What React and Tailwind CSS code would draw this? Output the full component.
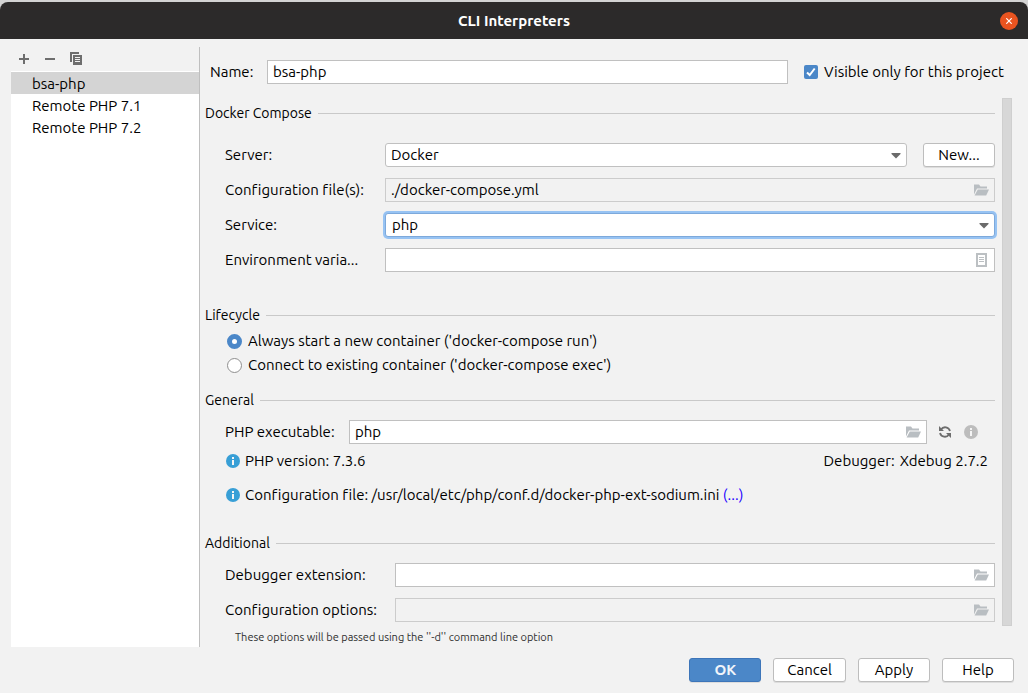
import React from "react";

function FolderIcon() {
  return (
    <svg width="16" height="12" viewBox="0 0 16 12" className="block" fill="#b9bec2" aria-hidden="true">
      <path d="M0 0.500h5l1.500 2H13v2H3L0 10.500z" />
      <path d="M3.800 5.500H15l-2.800 6H.6z" />
    </svg>
  );
}

function DocIcon() {
  return (
    <svg width="14" height="14" viewBox="0 0 14 14" className="block" fill="none" stroke="#bcc0c3" aria-hidden="true">
      <path d="M1 1h9v12H1z" strokeWidth="2" />
      <path d="M3 4.500h5M3 6.500h5M3 8.500h5" />
    </svg>
  );
}

function InfoIcon({ color }) {
  return (
    <svg width="14" height="14" viewBox="0 0 14 14" className="block shrink-0" aria-hidden="true">
      <circle cx="7" cy="7" r="7" fill={color} />
      <path d="M6 3h2v2H6zM6 6h2v5H6z" fill="#f5f5f5" />
    </svg>
  );
}

function Arrow() {
  return (
    <svg width="10" height="6" viewBox="0 0 10 6" className="pointer-events-none absolute right-1.5 top-2.5" aria-hidden="true">
      <path d="M0.500 0h9v1L5 5.500L0.500 1z" fill="#6b6b6b" />
    </svg>
  );
}

function Heading({ children, className }) {
  return (
    <div className={`flex h-5 items-center gap-1.5 ${className}`}>
      <h2 className="text-sm leading-5">{children}</h2>
      <span className="h-px grow bg-[#c9c9c9]" />
    </div>
  );
}

function Select({ id, value, focused }) {
  const look = focused
    ? "border-[#7da9db] px-1.5 ring-2 ring-[#97c3f3]"
    : "border-[#c0c0c0] px-[5px]";
  return (
    <div className="relative grow">
      <select id={id} className={`block h-6 w-full appearance-none rounded-[3px] border bg-white outline-none ${look}`}>
        <option>{value}</option>
      </select>
      <Arrow />
    </div>
  );
}

function Field({ id, value = "", disabled, action, icon }) {
  return (
    <div className={`flex h-6 grow items-center border pr-1 ${disabled ? "border-[#cccccc] bg-[#f2f2f2]" : "border-[#c0c0c0] bg-white"}`}>
      <input id={id} defaultValue={value} readOnly={disabled} className="h-full w-0 grow bg-transparent px-[5px] pb-0.5 outline-none" />
      {icon && (
        <button type="button" aria-label={action}>
          {icon}
        </button>
      )}
    </div>
  );
}

function Button({ children, primary }) {
  return (
    <button
      type="button"
      className={`h-6 min-w-18 rounded-[3px] border px-[13px] shadow-[0_1px_0_#dddddd] ${primary ? "border-[#3d75b9] bg-[#4b87c8] font-bold text-[#f0f4fa]" : "border-[#bdbdbd] bg-white"}`}
    >
      {children}
    </button>
  );
}

function Radio({ label, checked }) {
  return (
    <label className="flex h-6 items-center gap-1.5">
      <input
        type="radio"
        name="lifecycle"
        defaultChecked={checked}
        className="size-[15px] appearance-none rounded-full border border-[#8f8f8f] bg-white checked:border-5 checked:border-[#4b87c8]"
      />
      {label}
    </label>
  );
}

const interpreters = ["bsa-php", "Remote PHP 7.1", "Remote PHP 7.2"];

export default function App() {
  return (
    <div className="flex min-h-screen flex-col bg-[#d3d3d3] pt-0.5 font-['Ubuntu','Noto_Sans',sans-serif] text-[15px] leading-5 text-black [font-variant-ligatures:none]">
      <header className="relative flex h-[37px] items-center justify-center rounded-t-lg bg-[#2c2a2a]">
        <h1 className="font-bold text-white">CLI Interpreters</h1>
        <button type="button" aria-label="Close" className="absolute right-2.5 top-2.5 flex size-[18px] items-center justify-center rounded-full bg-[#e95420]">
          <svg width="6" height="6" viewBox="0 0 6 6" stroke="#fff" strokeWidth="1.2" aria-hidden="true">
            <path d="M.3.3l5.400 5.400M5.700.3L.3 5.700" />
          </svg>
        </button>
      </header>

      <div className="flex grow bg-[#f2f2f2] pl-[11px]">
        <aside className="flex w-[188px] shrink-0 flex-col">
          <div className="flex h-8 items-center gap-3 pl-1.5 pt-2">
            <button type="button" aria-label="Add" className="flex size-3.5 items-center justify-center">
              <svg width="10" height="10" viewBox="0 0 10 10" fill="#6e6e6e"><path d="M4 0h2v4h4v2H6v4H4V6H0V4h4z" /></svg>
            </button>
            <button type="button" aria-label="Remove" className="flex size-3.5 items-center justify-center">
              <svg width="10" height="10" viewBox="0 0 10 10" fill="#6e6e6e"><path d="M0 4h10v2H0z" /></svg>
            </button>
            <button type="button" aria-label="Copy" className="flex size-3.5 items-center justify-center">
              <svg width="12" height="14" viewBox="0 0 12 14">
                <path d="M0 0h9v2H2v8H0z" fill="#6e6e6e" />
                <path d="M3 3h9v10H3z" fill="#6e6e6e" />
                <path d="M5 5.500h5M5 7.500h5M5 9.500h5" stroke="#f2f2f2" />
              </svg>
            </button>
          </div>
          <ul className="grow bg-white pt-px">
            {interpreters.map((name, i) => (
              <li key={name} className={`pl-[21px] pt-0.5 ${i === 0 ? "bg-[#d4d4d4]" : ""}`}>{name}</li>
            ))}
          </ul>
        </aside>

        <main className="mt-2 flex grow flex-col border-l border-[#bfbfbf] pl-[5px] pr-4">
          <div className="mt-[13px] flex h-6 items-center pl-[5px]">
            <label htmlFor="name" className="w-[57px]">Name:</label>
            <Field id="name" value="bsa-php" />
            <label className="ml-4 flex w-52 items-center gap-1.5">
              <span className="relative flex size-3.5">
                <input type="checkbox" defaultChecked className="size-3.5 appearance-none rounded-xs bg-[#4b87c8]" />
                <svg width="14" height="14" viewBox="0 0 14 14" className="pointer-events-none absolute inset-0" fill="none" stroke="#fff" strokeWidth="2" aria-hidden="true">
                  <path d="M3 7.500l2.700 2.500L10.700 3.500" />
                </svg>
              </span>
              Visible only for this project
            </label>
          </div>

          <div className="mt-3.5 flex grow">
            <div className="grow pb-1.5">
              <Heading className="mt-[5px]">Docker Compose</Heading>
              <div className="mt-5 grid grid-cols-[160px_1fr] items-center gap-y-[11px] pl-5">
                <label htmlFor="server">Server:</label>
                <div className="flex gap-4">
                  <Select id="server" value="Docker" />
                  <Button>New...</Button>
                </div>
                <label htmlFor="files">Configuration file(s):</label>
                <Field id="files" value="./docker-compose.yml" disabled action="Browse" icon={<FolderIcon />} />
                <label htmlFor="service">Service:</label>
                <Select id="service" value="php" focused />
                <label htmlFor="env">Environment varia...</label>
                <Field id="env" action="Edit variables" icon={<DocIcon />} />
              </div>

              <Heading className="mt-[33px]">Lifecycle</Heading>
              <div className="mt-1 pl-[22px]">
                <Radio label="Always start a new container ('docker-compose run')" checked />
                <Radio label="Connect to existing container ('docker-compose exec')" />
              </div>

              <Heading className="mt-[13px]">General</Heading>
              <div className="mt-2.5 flex items-center pl-5">
                <label htmlFor="exe" className="w-[124px]">PHP executable:</label>
                <Field id="exe" value="php" action="Browse" icon={<FolderIcon />} />
                <div className="flex w-[68px] items-center gap-3 pl-[11px]">
                  <button type="button" aria-label="Refresh">
                    <svg width="14" height="14" viewBox="0 0 14 14" fill="none" stroke="#6e6e6e" strokeWidth="1.800" className="block">
                      <path d="M3 4.500A5 5 0 0 1 12 6M11 9.500A5 5 0 0 1 2 8" />
                      <path d="M1 1v5h5zM13 13V8H8z" fill="#6e6e6e" stroke="none" />
                    </svg>
                  </button>
                  <button type="button" aria-label="Information"><InfoIcon color="#bdbdbd" /></button>
                </div>
              </div>
              <div className="mt-[7px] flex items-center gap-[5px] pl-[21px] pr-[7px]">
                <InfoIcon color="#389fd6" />
                <span className="grow">PHP version: 7.3.6</span>
                <span>Debugger:</span>
                <span>Xdebug 2.7.2</span>
              </div>
              <div className="mt-3.5 flex items-center gap-[5px] pl-[21px]">
                <InfoIcon color="#389fd6" />
                <span>Configuration file: /usr/local/etc/php/conf.d/docker-php-ext-sodium.ini <a href="#more" className="text-[#1a00ff]">(...)</a></span>
              </div>

              <Heading className="mt-7">Additional</Heading>
              <div className="mt-2.5 grid grid-cols-[170px_1fr] items-center gap-y-[11px] pl-5">
                <label htmlFor="ext">Debugger extension:</label>
                <Field id="ext" action="Browse" icon={<FolderIcon />} />
                <label htmlFor="opts">Configuration options:</label>
                <Field id="opts" disabled action="Browse" icon={<FolderIcon />} />
              </div>
              <p className="mt-[5px] h-3.5 pl-[30px] text-[11px] leading-5 text-[#303030]">
                These options will be passed using the ''-d'' command line option
              </p>
            </div>
            <div className="mb-[21px] ml-[7px] w-2.5 border border-[#cfcfcf] bg-[#d7d7d7]" />
          </div>
        </main>
      </div>

      <footer className="flex justify-end gap-3 bg-[#f2f2f2] pb-[11px] pr-3.5 pt-[11px]">
        <Button primary>OK</Button>
        <Button>Cancel</Button>
        <Button>Apply</Button>
        <Button>Help</Button>
      </footer>
    </div>
  );
}
